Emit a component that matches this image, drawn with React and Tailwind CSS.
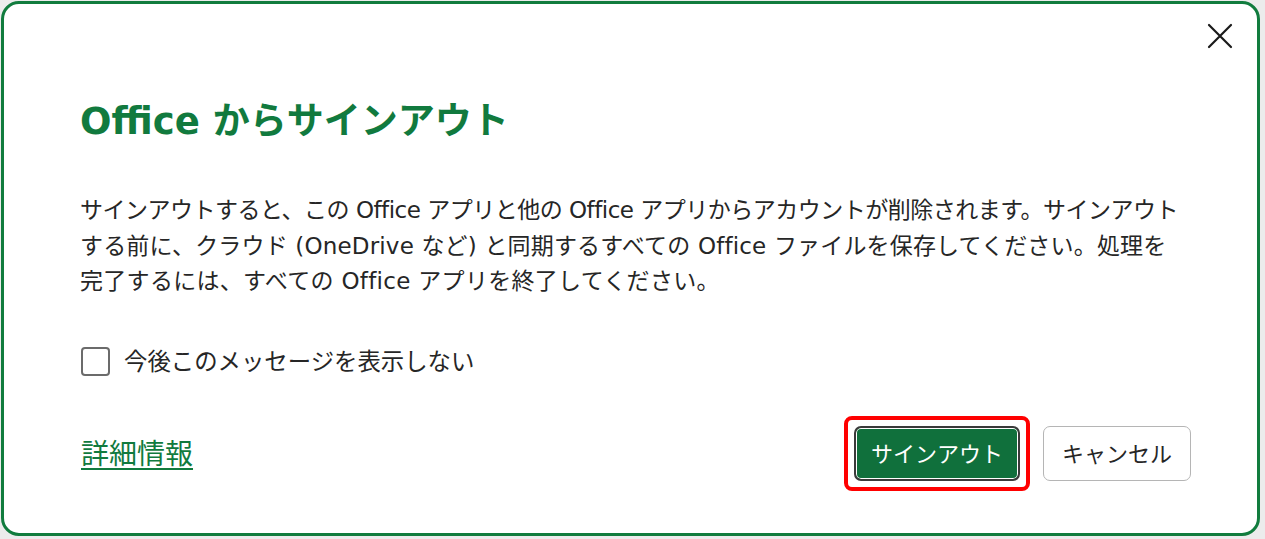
import React from "react";

const font = { fontFamily: '"DejaVu Sans", "Noto Sans CJK JP", sans-serif' };
const uiFont = { fontFamily: '"Open Sans", "Noto Sans CJK JP", sans-serif' };

export default function App() {
  return (
    <div className="w-[1265px] h-[539px] bg-[#ececec] overflow-hidden" style={font}>
      <div className="ml-[1px] mt-[1px] w-[1259px] h-[535px] bg-white border-[3px] border-[#117c3e] rounded-[18px] flex flex-col">
        <div className="flex justify-end pt-[17px] pr-[22px]">
          <svg width="30" height="30" viewBox="0 0 30 30">
            <path d="M4 4 L26 26 M26 4 L4 26" stroke="#1a1a1a" strokeWidth="2.2" strokeLinecap="round" />
          </svg>
        </div>
        <h1 className="pl-[76px] mt-[47px] text-[37px] leading-[48px] font-bold text-[#117a3e]">
          Office からサインアウト
        </h1>
        <p className="pl-[76px] mt-[47px] text-[23px] leading-[35.5px] text-[#262626]">
          <span className="block tracking-[-0.5px]">サインアウトすると、この Office アプリと他の Office アプリからアカウントが削除されます。サインアウト</span>
          <span className="block tracking-[0.17px]">する前に、クラウド (OneDrive など) と同期するすべての Office ファイルを保存してください。処理を</span>
          <span className="block tracking-[0.3px]">完了するには、すべての Office アプリを終了してください。</span>
        </p>
        <label className="pl-[77px] mt-[47px] flex items-center gap-[14px]">
          <span className="w-[29px] h-[29px] border-2 border-[#6b6b6b] rounded-[4px] bg-white" />
          <span className="text-[23.4px] leading-[30px] text-[#262626]">今後このメッセージを表示しない</span>
        </label>
        <div className="mt-[39px] pl-[77px] pr-[66px] flex items-center justify-between" style={uiFont}>
          <a className="text-[28px] leading-[34px] text-[#117a3e] underline underline-offset-[4px] decoration-[2px]">詳細情報</a>
          <div className="flex items-center gap-[13px]">
            <div className="border-4 border-[#ff0000] rounded-[8px] p-[6px]">
              <button className="w-[166px] h-[55px] rounded-[7px] border-2 border-[#3a3a3a] shadow-[inset_0_0_0_1px_#ffffff] bg-[#10703c] text-white text-[22px] leading-none">
                サインアウト
              </button>
            </div>
            <button className="w-[148px] h-[55px] rounded-[7px] border border-[#b5b5b5] bg-white text-[#262626] text-[22px] leading-none">
              キャンセル
            </button>
          </div>
        </div>
      </div>
    </div>
  );
}
